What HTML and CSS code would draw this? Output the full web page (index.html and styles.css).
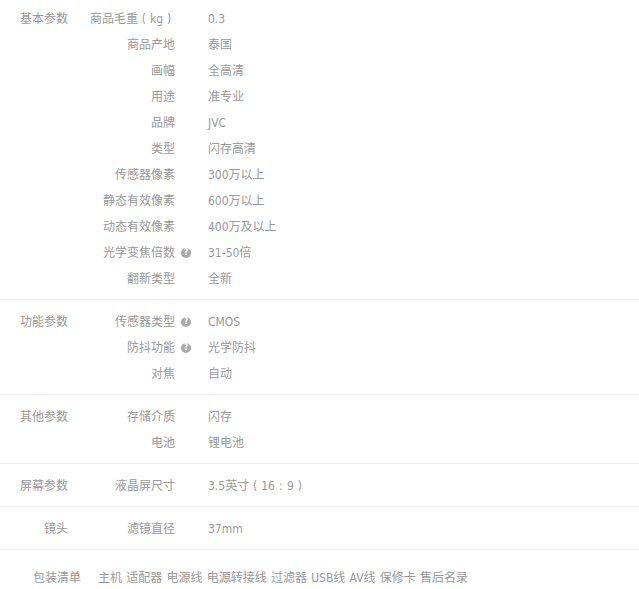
FILE: index.html
```html
<!DOCTYPE html>
<html lang="zh">
<head>
<meta charset="utf-8">
<title>商品参数</title>
<link rel="stylesheet" href="styles.css">
</head>
<body>
<section class="group first">
  <h3 class="group-name">基本参数</h3>
  <dl class="rows">
    <div class="row"><dt>商品毛重<span class="fw">(</span>kg<span class="fw">)</span></dt><dd>0.3</dd></div>
    <div class="row"><dt>商品产地</dt><dd>泰国</dd></div>
    <div class="row"><dt>画幅</dt><dd>全高清</dd></div>
    <div class="row"><dt>用途</dt><dd>准专业</dd></div>
    <div class="row"><dt>品牌</dt><dd>JVC</dd></div>
    <div class="row"><dt>类型</dt><dd>闪存高清</dd></div>
    <div class="row"><dt>传感器像素</dt><dd>300万以上</dd></div>
    <div class="row"><dt>静态有效像素</dt><dd>600万以上</dd></div>
    <div class="row"><dt>动态有效像素</dt><dd>400万及以上</dd></div>
    <div class="row"><dt>光学变焦倍数<span class="tip">?</span></dt><dd>31-50倍</dd></div>
    <div class="row"><dt>翻新类型</dt><dd>全新</dd></div>
  </dl>
</section>
<section class="group">
  <h3 class="group-name">功能参数</h3>
  <dl class="rows">
    <div class="row"><dt>传感器类型<span class="tip">?</span></dt><dd>CMOS</dd></div>
    <div class="row"><dt>防抖功能<span class="tip">?</span></dt><dd>光学防抖</dd></div>
    <div class="row"><dt>对焦</dt><dd>自动</dd></div>
  </dl>
</section>
<section class="group">
  <h3 class="group-name">其他参数</h3>
  <dl class="rows">
    <div class="row"><dt>存储介质</dt><dd>闪存</dd></div>
    <div class="row"><dt>电池</dt><dd>锂电池</dd></div>
  </dl>
</section>
<section class="group">
  <h3 class="group-name">屏幕参数</h3>
  <dl class="rows">
    <div class="row"><dt>液晶屏尺寸</dt><dd>3.5英寸<span class="fw">(</span>16<span class="fw">:</span>9<span class="fw">)</span></dd></div>
  </dl>
</section>
<section class="group">
  <h3 class="group-name">镜头</h3>
  <dl class="rows">
    <div class="row"><dt>滤镜直径</dt><dd>37mm</dd></div>
  </dl>
</section>
<section class="package">
  <h3 class="package-name">包装清单</h3>
  <p class="package-list">主机 适配器 电源线 电源转接线 过滤器 USB线 AV线 保修卡 售后名录</p>
</section>
</body>
</html>
```
FILE: styles.css
```css
* { box-sizing: border-box; }
html, body { margin: 0; padding: 0; background: #fff; }
body {
  width: 639px;
  height: 589px;
  overflow: hidden;
  font-family: "DejaVu Sans", "Noto Sans CJK SC", sans-serif;
  font-stretch: condensed;
  font-size: 12px;
  line-height: 26px;
  color: #999;
}
.group {
  display: flex;
  padding: 9px 0 7px;
  border-bottom: 1px solid #eee;
}
.group.first { padding-top: 6px; }
.group-name {
  width: 68px;
  margin: 0;
  font-size: 12px;
  font-weight: normal;
  text-align: right;
}
.rows { margin: 0 0 0 1px; }
.row { display: flex; height: 26px; }
.row dt {
  position: relative;
  width: 106px;
  text-align: right;
}
.row dd { margin: 0 0 0 33px; }
.fw {
  display: inline-block;
  width: 12px;
  text-align: center;
}
.tip {
  position: absolute;
  left: 112px;
  top: 8px;
  width: 10px;
  height: 10px;
  border-radius: 50%;
  background: #aaa;
  color: #fff;
  font-size: 8px;
  font-weight: bold;
  line-height: 10px;
  text-align: center;
}
.package {
  display: flex;
  padding-top: 15px;
}
.package-name {
  width: 81px;
  margin: 0;
  font-size: 12px;
  font-weight: normal;
  text-align: right;
}
.package-list { margin: 0 0 0 17px; word-spacing: 0.8px; }
```
